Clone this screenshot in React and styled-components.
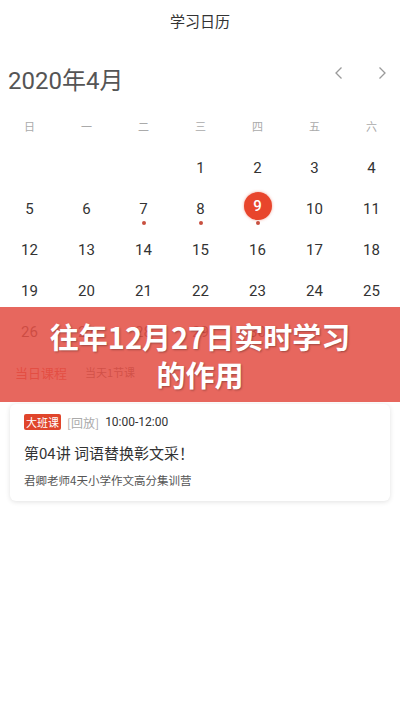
import React from 'react';
import styled, { createGlobalStyle } from 'styled-components';

const GlobalStyle = createGlobalStyle`
    body {
        margin: 0;
        background: #ffffff;
        font-family: "Noto Sans CJK SC", "Noto Sans", Roboto, sans-serif;
    }
`;

const weekdays = ['日', '一', '二', '三', '四', '五', '六'];

const buildWeeks = () => {
    const cells = [null, null, null];
    for (let d = 1; d <= 30; d++) cells.push(d);
    while (cells.length % 7) cells.push(null);
    const weeks = [];
    for (let i = 0; i < cells.length; i += 7) weeks.push(cells.slice(i, i + 7));
    return weeks;
};

const marked = [7, 8, 9];
const selected = 9;

const App = () => {
    const weeks = buildWeeks();

    return (
        <Page>
            <GlobalStyle />
            <Header>学习日历</Header>

            <MonthBar>
                <MonthTitle>2020年4月</MonthTitle>
                <Arrows>
                    <Arrow viewBox='0 0 16 16'>
                        <path d='M10.5 2.5 L5 8 L10.5 13.5' />
                    </Arrow>
                    <Arrow viewBox='0 0 16 16'>
                        <path d='M5.5 2.5 L11 8 L5.5 13.5' />
                    </Arrow>
                </Arrows>
            </MonthBar>

            <WeekRow>
                {weekdays.map((w) => (
                    <WeekLabel key={w}>{w}</WeekLabel>
                ))}
            </WeekRow>

            <Grid>
                {weeks.map((week, i) =>
                    week.map((day, j) => (
                        <Cell key={`${i}-${j}`}>
                            {day && (
                                <DayNum $active={day === selected}>{day}</DayNum>
                            )}
                            {day && marked.includes(day) && <Dot />}
                        </Cell>
                    ))
                )}
            </Grid>

            <Tabs>
                <TabMain>当日课程</TabMain>
                <TabSub>当天1节课</TabSub>
            </Tabs>

            <Card>
                <CardMeta>
                    <Tag>大班课</Tag>
                    <Replay>[回放]</Replay>
                    <Time>10:00-12:00</Time>
                </CardMeta>
                <CardTitle>第04讲 词语替换彰文采！</CardTitle>
                <CardSub>君卿老师4天小学作文高分集训营</CardSub>
            </Card>

            <Banner>
                <BannerText>
                    往年12月27日实时学习
                    <br />
                    的作用
                </BannerText>
            </Banner>
        </Page>
    );
};

export default App;

const Page = styled.div`
    position: relative;
    width: 400px;
    height: 711px;
    overflow: hidden;
    background: #fff;
`;

const Header = styled.div`
    height: 40px;
    display: flex;
    align-items: center;
    justify-content: center;
    font-size: 15px;
    color: #333;
`;

const MonthBar = styled.div`
    height: 72px;
    display: flex;
    justify-content: space-between;
    align-items: flex-start;
    padding: 0 10px 0 8px;
    box-sizing: border-box;
`;

const MonthTitle = styled.div`
    margin-top: 26px;
    font-family: Roboto, "Noto Sans CJK SC", sans-serif;
    font-size: 24px;
    line-height: 30px;
    color: #555;
`;

const Arrows = styled.div`
    display: flex;
    gap: 27px;
    margin-top: 25px;
`;

const Arrow = styled.svg`
    width: 16px;
    height: 16px;
    fill: none;
    stroke: #9a9a9a;
    stroke-width: 1.3;
`;

const WeekRow = styled.div`
    height: 28px;
    display: grid;
    grid-template-columns: repeat(7, 57px);
    padding-left: 1px;
`;

const WeekLabel = styled.div`
    display: flex;
    align-items: center;
    justify-content: center;
    font-size: 11px;
    color: #aaa;
`;

const Grid = styled.div`
    display: grid;
    grid-template-columns: repeat(7, 57px);
    grid-auto-rows: 41px;
    padding: 7px 0 0 1px;
`;

const Cell = styled.div`
    position: relative;
    display: flex;
    align-items: center;
    justify-content: center;
`;

const DayNum = styled.span`
    position: relative;
    top: ${(p) => (p.$active ? '-3px' : '0')};
    width: 28px;
    height: 28px;
    border-radius: 50%;
    display: flex;
    align-items: center;
    justify-content: center;
    font-family: Roboto, sans-serif;
    font-size: 15px;
    font-weight: ${(p) => (p.$active ? 500 : 400)};
    color: ${(p) => (p.$active ? '#fff' : '#333')};
    background: ${(p) => (p.$active ? '#e8452c' : 'transparent')};
    box-shadow: ${(p) => (p.$active ? '0 0 3px rgba(232, 69, 44, 0.5)' : 'none')};
`;

const Dot = styled.span`
    position: absolute;
    top: 33px;
    left: 50%;
    margin-left: -2px;
    width: 4px;
    height: 4px;
    border-radius: 50%;
    background: #c8503f;
`;

const Tabs = styled.div`
    height: 40px;
    display: flex;
    align-items: center;
    gap: 18px;
    padding: 0 15px;
`;

const TabMain = styled.span`
    font-size: 13px;
    color: #e04030;
`;

const TabSub = styled.span`
    font-size: 11px;
    color: #555;
`;

const Card = styled.div`
    margin: 12px 10px 0;
    padding: 9px 14px 12px;
    background: #fff;
    border-radius: 6px;
    box-shadow: 0 1px 5px rgba(0, 0, 0, 0.12);
`;

const CardMeta = styled.div`
    display: flex;
    align-items: center;
    gap: 6px;
    height: 18px;
`;

const Tag = styled.span`
    background: #e0452c;
    color: #fff;
    font-size: 11px;
    line-height: 16px;
    padding: 0 2px;
    border-radius: 2px;
`;

const Replay = styled.span`
    font-size: 12px;
    color: #aaa;
`;

const Time = styled.span`
    font-family: Roboto, sans-serif;
    font-size: 12px;
    color: #333;
`;

const CardTitle = styled.div`
    margin-top: 11px;
    font-size: 15px;
    line-height: 22px;
    color: #333;
`;

const CardSub = styled.div`
    margin-top: 7px;
    font-size: 11.5px;
    line-height: 18px;
    color: #555;
`;

const Banner = styled.div`
    position: absolute;
    left: 0;
    top: 307px;
    width: 100%;
    height: 95px;
    background: rgba(228, 80, 70, 0.87);
    display: flex;
    align-items: center;
    justify-content: center;
`;

const BannerText = styled.div`
    text-align: center;
    font-size: 29px;
    font-weight: 700;
    line-height: 38px;
    color: #fff;
    text-shadow: 1px 1px 2px rgba(0, 0, 0, 0.3);
`;
